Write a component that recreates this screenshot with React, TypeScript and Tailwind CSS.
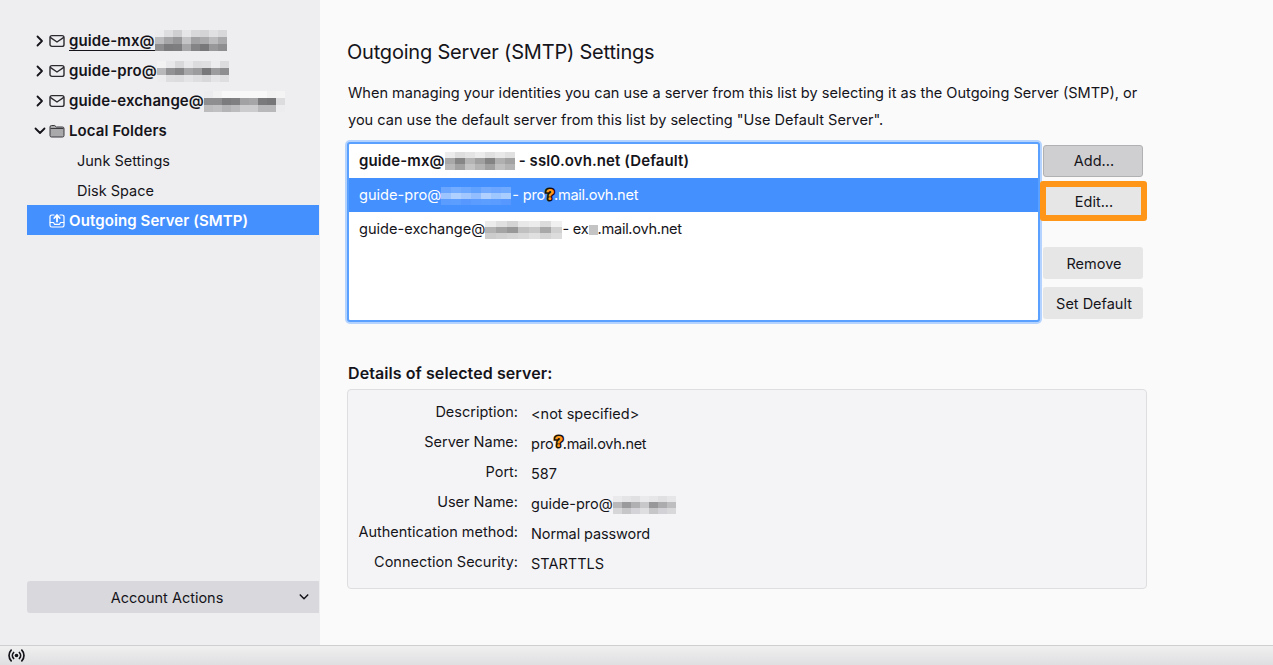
const font = "[font-family:Inter,'Liberation_Sans',sans-serif]";

type BlurProps = {
  cells: string[][];
  size?: number;
  rowH?: number;
  className?: string;
};

// pixelated patch that hides the domain part of an address
const Blur = ({ cells, size = 9, rowH = 7, className = "" }: BlurProps) => (
  <span className={`inline-flex flex-col align-middle ${className}`}>
    {cells.map((row, i) => (
      <span key={i} className="flex">
        {row.map((c, j) => (
          <span key={j} style={{ width: size, height: rowH, background: c }} />
        ))}
      </span>
    ))}
  </span>
);

const blurMx = [
  ["#ececee", "#dedee0", "#cfcfd2", "#e6e6e8", "#d8d8da", "#d4d4d6", "#e0e0e2", "#d8d8da"],
  ["#bcbcbf", "#a6a6a9", "#98989b", "#c4c4c7", "#a2a2a5", "#aaaaad", "#bcbcbf", "#aaaaad"],
  ["#8e8e91", "#7c7c7f", "#7e7e81", "#a6a6a9", "#848487", "#78787b", "#98989b", "#8e8e91"],
];
const blurPro = [
  ["#f2f2f3", "#e8e8ea", "#d8d8da", "#e8e8ea", "#dcdcde", "#dedee0", "#ececee", "#dcdcde"],
  ["#b8b8bb", "#929295", "#868689", "#a6a6a9", "#9c9c9f", "#78787b", "#9c9c9f", "#8e8e91"],
  ["#ececee", "#dedee0", "#dcdcde", "#e4e4e6", "#dedee0", "#d8d8da", "#e4e4e6", "#dedee0"],
];
const blurEx = [
  ["#ececee", "#f2f2f3", "#f8f8f8", "#f8f8f8", "#f8f8f8", "#f8f8f8", "#f8f8f8", "#f2f2f3", "#f4f4f5"],
  ["#8e8e91", "#8e8e91", "#7c7c7f", "#808083", "#a2a2a5", "#a6a6a9", "#7a7a7d", "#767679", "#dcdcde"],
  ["#bcbcbf", "#c0c0c3", "#b4b4b7", "#bcbcbf", "#cccccf", "#cccccf", "#b8b8bb", "#b8b8bb", "#ececee"],
];
const blurListMx = [
  ["#ececec", "#dedede", "#e4e4e4", "#ececec", "#e0e0e0", "#e8e8e8", "#e0e0e0"],
  ["#a8a8a8", "#868686", "#b4b4b4", "#a0a0a0", "#848484", "#b0b0b0", "#a2a2a2"],
  ["#b8b8b8", "#a2a2a2", "#c4c4c4", "#b4b4b4", "#a0a0a0", "#c0c0c0", "#b4b4b4"],
];
const blurListPro = [
  ["#6aa6ff", "#74acff", "#6ca8ff", "#62a2ff", "#72aaff", "#6ca6ff", "#70aaff"],
  ["#9cc4ff", "#b0d0ff", "#a2c8ff", "#92beff", "#b0d0ff", "#9ec6ff", "#aacdff"],
  ["#5a9cff", "#5c9eff", "#5698ff", "#5a9cff", "#5c9eff", "#5a9cff", "#5698ff"],
];
const blurListEx = [
  ["#ececec", "#e0e0e0", "#d4d4d4", "#e8e8e8", "#ececec", "#dcdcdc", "#f0f0f0"],
  ["#b4b4b4", "#a4a4a4", "#989898", "#c0c0c0", "#c8c8c8", "#a8a8a8", "#d0d0d0"],
  ["#cccccc", "#d0d0d0", "#d4d4d4", "#d8d8d8", "#e0e0e0", "#d4d4d4", "#dcdcdc"],
];
const blurUser = [
  ["#eaeaec", "#e4e4e6", "#e0e0e2", "#eaeaec", "#e6e6e8", "#e0e0e2", "#e6e6e8"],
  ["#b8b8bb", "#9a9a9d", "#b0b0b3", "#c8c8cb", "#98989b", "#acacaf", "#bebec1"],
  ["#d6d6d8", "#c6c6c9", "#d4d4d8", "#dedee0", "#c6c6c9", "#d2d2d6", "#d8d8da"],
];

const ChevronRight = () => (
  <svg width="12" height="12" viewBox="0 0 12 12" fill="none" stroke="#15141a" strokeWidth="1.8" strokeLinecap="round" strokeLinejoin="round">
    <path d="M3.500 1.500 8 6l-4.500 4.500" />
  </svg>
);

const ChevronDown = ({ size = 12 }: { size?: number }) => (
  <svg width={size} height={size} viewBox="0 0 12 12" fill="none" stroke="#15141a" strokeWidth="1.8" strokeLinecap="round" strokeLinejoin="round">
    <path d="M1.500 3.500 6 8l4.500-4.500" />
  </svg>
);

const MailIcon = () => (
  <svg width="16" height="16" viewBox="0 0 16 16" fill="none" stroke="#2c2b30" strokeWidth="1.4" strokeLinejoin="round" strokeLinecap="round">
    <rect x="1" y="2.600" width="14" height="10.800" rx="2" />
    <path d="M1.600 4.600 8 9l6.400-4.400" />
  </svg>
);

const FolderIcon = () => (
  <svg width="16" height="16" viewBox="0 0 16 16">
    <path d="M1 4a1.500 1.500 0 0 1 1.500-1.500h3.200L7.300 4h6.200A1.500 1.500 0 0 1 15 5.500v7A1.500 1.500 0 0 1 13.500 14h-11A1.500 1.500 0 0 1 1 12.500Z" fill="#a9a9ac" stroke="#3a393e" strokeWidth="1" />
    <path d="M1.500 5.500h13" stroke="#3a393e" strokeWidth="1" />
  </svg>
);

const OutboxIcon = () => (
  <svg width="16" height="16" viewBox="0 0 16 16" fill="none" stroke="#fff" strokeWidth="1.2" strokeLinecap="round" strokeLinejoin="round">
    <path d="M5 2H2.800A1.800 1.800 0 0 0 1 3.800v8.400A1.800 1.800 0 0 0 2.800 14h10.400a1.800 1.800 0 0 0 1.800-1.800V3.800A1.800 1.800 0 0 0 13.200 2H11" />
    <path d="M1.200 9.500h3.300l1 1.800h5l1-1.800h3.300" />
    <path d="M8 8.500V2.500" strokeWidth="1.800" />
    <path d="M5.300 5 8 2.200 10.700 5" strokeWidth="1.800" />
  </svg>
);

const StatusIcon = () => (
  <svg width="17" height="17" viewBox="0 0 16 16" fill="none" stroke="#15141a" strokeWidth="1.600" strokeLinecap="round">
    <circle cx="8" cy="8" r="1.700" fill="#15141a" stroke="none" />
    <path d="M5.300 5.200a4 4 0 0 0 0 5.600M10.700 5.200a4 4 0 0 1 0 5.600" />
    <path d="M3 3a7.200 7.200 0 0 0 0 10M13 3a7.200 7.200 0 0 1 0 10" />
  </svg>
);

// the orange "?" with a black outline that covers one letter in the server name
const Mark = () => (
  <span className="relative inline-block w-[9px] h-[14px] align-[-1px]">
    <span className="absolute left-0 top-[-2px] w-[10px] text-[#ff9a1c] text-[15px] leading-[15px] font-extrabold text-center [-webkit-text-stroke:3px_#15100a] [paint-order:stroke_fill]">
      ?
    </span>
  </span>
);

type TreeRowProps = {
  icon?: React.ReactNode;
  chevron?: React.ReactNode;
  selected?: boolean;
  bold?: boolean;
  indent?: boolean;
  children: React.ReactNode;
};

const TreeRow = ({ icon, chevron, selected, bold, indent, children }: TreeRowProps) => (
  <div
    className={`h-[30px] pt-[2px] flex items-center whitespace-nowrap ${
      selected ? "bg-[#4590ff] text-white" : "text-[#15141a]"
    } ${bold ? "font-semibold text-[15px] tracking-[0.1px]" : "text-[14.500px]"}`}
  >
    <span className="w-[6px] shrink-0" />
    <span className="w-[14px] shrink-0 flex justify-center">{chevron}</span>
    <span className="w-[2px] shrink-0" />
    <span className="w-[20px] shrink-0 flex">{icon}</span>
    {indent && <span className="w-[8px] shrink-0" />}
    {children}
  </div>
);

const Sidebar = () => (
  <aside className="w-[320px] shrink-0 bg-[#eeeef0] flex flex-col pl-[27px] pt-[25px] pb-[32px]">
    <div className="w-[292px]">
      <TreeRow bold chevron={<ChevronRight />} icon={<MailIcon />}>
        <span className="border-b border-[#15141a] leading-[18px]">guide-mx@</span>
        <Blur cells={blurMx} size={9} rowH={7} className="-mt-[1px]" />
      </TreeRow>
      <TreeRow bold chevron={<ChevronRight />} icon={<MailIcon />}>
        guide-pro@
        <Blur cells={blurPro} size={9} rowH={7} />
      </TreeRow>
      <TreeRow bold chevron={<ChevronRight />} icon={<MailIcon />}>
        guide-exchange@
        <Blur cells={blurEx} size={9} rowH={7} />
      </TreeRow>
      <TreeRow bold chevron={<ChevronDown />} icon={<FolderIcon />}>
        Local Folders
      </TreeRow>
      <TreeRow indent>Junk Settings</TreeRow>
      <TreeRow indent>Disk Space</TreeRow>
      <TreeRow selected bold icon={<OutboxIcon />}>
        Outgoing Server (SMTP)
      </TreeRow>
    </div>
    <button className="mt-auto w-[292px] h-[32px] pt-[2px] rounded-l-[3px] bg-[#d9d9dd] text-[14.500px] text-[#15141a] relative flex items-center justify-center pr-[12px]">
      Account Actions
      <span className="absolute right-[10px] top-[11px]">
        <ChevronDown size={10} />
      </span>
    </button>
  </aside>
);

const SideButton = ({ children, active }: { children: React.ReactNode; active?: boolean }) => (
  <button
    className={`w-[100px] h-[32px] rounded-[3px] text-[14.500px] text-[#15141a] flex items-center justify-center pl-[2px] ${
      active ? "bg-[#cfcfd1] border border-[#b1b1b3]" : "bg-[#e6e6e6] pt-[2px]"
    }`}
  >
    {children}
  </button>
);

const details: [string, React.ReactNode][] = [
  ["Description:", "<not specified>"],
  ["Server Name:", <>pro<Mark /><span className="tracking-[-0.300px]">.mail.ovh.net</span></>],
  ["Port:", "587"],
  ["User Name:", <>guide-pro@<Blur cells={blurUser} size={9} rowH={6} /></>],
  ["Authentication method:", <span className="tracking-[-0.100px]">Normal password</span>],
  ["Connection Security:", "STARTTLS"],
];

export default function App() {
  return (
    <div className={`${font} w-[1273px] h-[665px] overflow-hidden flex flex-col bg-[#fafafa] text-[#15141a]`}>
      <div className="flex flex-1 min-h-0">
        <Sidebar />
        <main className="flex-1 pl-[27px] pt-[40px]">
          <h1 className="text-[20px] leading-[24px] tracking-[-0.200px] font-normal">
            Outgoing Server (SMTP) Settings
          </h1>
          <p className="mt-[16px] ml-[1px] w-[800px] text-[14.550px] leading-[27px]">
            When managing your identities you can use a server from this list by selecting it as the Outgoing Server (SMTP), or you can use the default server from this list by selecting "Use Default Server".
          </p>

          <div className="mt-[8px] flex">
            <div className="w-[693px] h-[180px] border-2 border-[#5aa0ff] shadow-[0_0_0_2px_#b4d4ff] rounded-[3px] bg-white text-[14.600px] overflow-hidden shrink-0">
              <div className="h-[34px] px-[10px] flex items-center font-semibold text-[15px] tracking-[0.1px] whitespace-nowrap">
                guide-mx@
                <Blur cells={blurListMx} size={10} rowH={6} className="mr-[4px]" />
                - ssl0.ovh.net (Default)
              </div>
              <div className="h-[34px] pt-[2px] px-[10px] flex items-center bg-[#4590ff] text-white whitespace-nowrap">
                guide-pro@
                <Blur cells={blurListPro} size={10} rowH={6} className="mr-[1px]" />
                <span className="tracking-[-0.200px]">- pro</span>
                <Mark />
                <span className="tracking-[-0.300px]">.mail.ovh.net</span>
              </div>
              <div className="h-[34px] pt-[2px] px-[10px] flex items-center whitespace-nowrap">
                guide-exchange@
                <Blur cells={blurListEx} size={11} rowH={6} />
                <span className="tracking-[-0.200px]">- ex</span>
                <span className="w-[9px] h-[10px] bg-[#c4c4c4]" />
                <span className="tracking-[-0.300px]">.mail.ovh.net</span>
              </div>
            </div>

            <div className="pt-[3px] flex flex-col items-center w-[106px]">
              <SideButton active>Add...</SideButton>
              <div className="mt-[4px] w-[107px] h-[40px] pt-[2px] pl-[2px] rounded-[3px] bg-[#e6e6e6] border-[6px] border-[#ff9619] flex items-center justify-center text-[14.500px]">
                Edit...
              </div>
              <div className="mt-[26px]">
                <SideButton>Remove</SideButton>
              </div>
              <div className="mt-[8px]">
                <SideButton>Set Default</SideButton>
              </div>
            </div>
          </div>

          <h2 className="mt-[41px] ml-[1px] text-[16px] leading-[20px] tracking-[0.080px] font-semibold">Details of selected server:</h2>
          <div className="mt-[6px] w-[800px] h-[200px] border border-[#dedee0] rounded-[4px] bg-[#f4f4f6] pt-[7px] text-[14.500px]">
            {details.map(([label, value]) => (
              <div key={label} className="h-[30px] flex">
                <span className="w-[170px] text-right leading-[29px] whitespace-nowrap">{label}</span>
                <span className="ml-[13px] leading-[33px] whitespace-nowrap flex items-center h-[33px]">
                  <span>{value}</span>
                </span>
              </div>
            ))}
          </div>
        </main>
      </div>
      <footer className="h-[20px] shrink-0 border-t border-[#cfcfd1] bg-gradient-to-b from-[#f0f0f1] to-[#dfdfe1] pl-[8px] flex items-center">
        <StatusIcon />
      </footer>
    </div>
  );
}
